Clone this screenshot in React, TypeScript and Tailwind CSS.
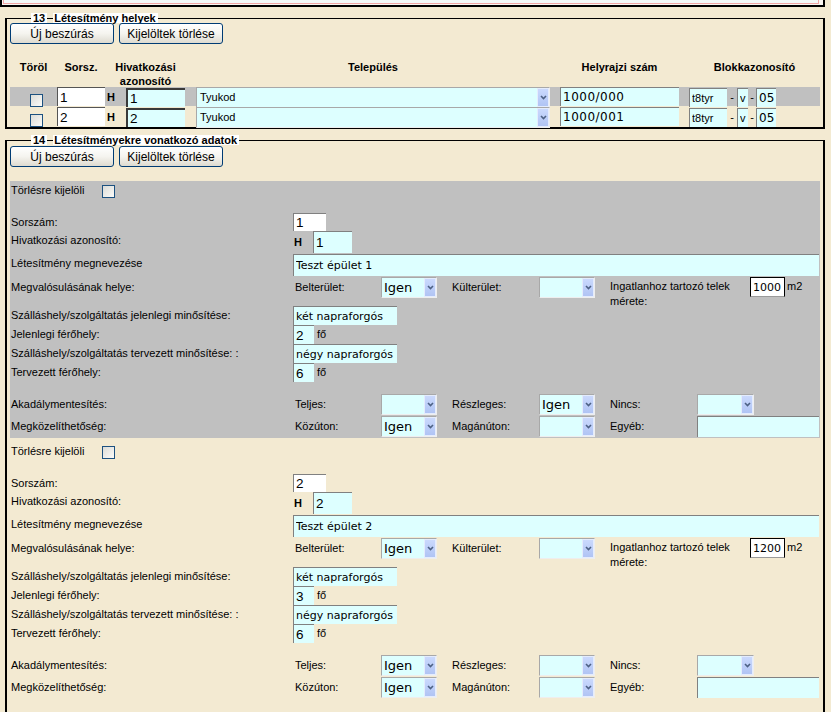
import React from "react";

// Form for sections 13 and 14: facility places and facility data.

const CYAN = "bg-[#ddffff]";
const EDGE = "border-t border-l border-t-[#808080] border-l-[#808080]";
const DIGIT = "font-['Liberation_Sans',Arial,sans-serif] text-[13.5px]";
const FIELD = "font-['DejaVu_Sans',Verdana,sans-serif] text-[11px]";

type Place = {
  no: string;
  ref: string;
  town: string;
  lot: string;
  block: [string, string, string];
};

type Facility = {
  no: string;
  ref: string;
  name: string;
  inner: string;
  outer: string;
  plot: string;
  curQual: string;
  curBeds: string;
  planQual: string;
  planBeds: string;
  full: string;
  partial: string;
  none: string;
  road: string;
  privateRoad: string;
};

const PLACES: Place[] = [
  { no: "1", ref: "1", town: "Tyukod", lot: "1000/000", block: ["t8tyr", "v", "05"] },
  { no: "2", ref: "2", town: "Tyukod", lot: "1000/001", block: ["t8tyr", "v", "05"] },
];

const FACILITIES: Facility[] = [
  {
    no: "1",
    ref: "1",
    name: "Teszt épület 1",
    inner: "Igen",
    outer: "",
    plot: "1000",
    curQual: "két napraforgós",
    curBeds: "2",
    planQual: "négy napraforgós",
    planBeds: "6",
    full: "",
    partial: "Igen",
    none: "",
    road: "Igen",
    privateRoad: "",
  },
  {
    no: "2",
    ref: "2",
    name: "Teszt épület 2",
    inner: "Igen",
    outer: "",
    plot: "1200",
    curQual: "két napraforgós",
    curBeds: "3",
    planQual: "négy napraforgós",
    planBeds: "6",
    full: "Igen",
    partial: "",
    none: "",
    road: "Igen",
    privateRoad: "",
  },
];

function Checkbox() {
  return (
    <span className="block h-[13px] w-[13px] border border-[#1c5180] bg-linear-to-br from-[#dcdcd7] to-[#fbfbf9]" />
  );
}

function XpButton({ children }: { children: React.ReactNode }) {
  return (
    <button className="h-[21px] w-[104px] rounded-[3px] border border-[#003c74] bg-linear-to-b from-white via-[#f5f4ef] to-[#dedbd0] text-[12px] leading-none text-black">
      {children}
    </button>
  );
}

function TextBox({ value, className }: { value: string; className: string }) {
  return (
    <input
      readOnly
      value={value}
      className={`shrink-0 pl-[2px] text-black outline-none ${className}`}
    />
  );
}

function Select({
  w,
  value,
  text = "pl-[2px] font-['DejaVu_Sans',Verdana,sans-serif] text-[13px]",
}: {
  w: string;
  value: string;
  text?: string;
}) {
  return (
    <div
      className={`flex h-[21px] shrink-0 border border-t-[#a8a8a8] border-l-[#a8a8a8] border-r-[#eeeeee] border-b-[#eeeeee] ${CYAN} ${w}`}
    >
      <span className={`flex flex-1 items-center overflow-hidden whitespace-nowrap ${text}`}>
        {value}
      </span>
      <span className="flex w-[12px] items-center justify-center border border-[#e4ecfd] bg-linear-to-b from-[#cad9fd] to-[#b0c4f4]">
        <svg width="7" height="5" viewBox="0 0 7 5">
          <path d="M1 1l2.5 2.5L6 1" stroke="#4d6185" strokeWidth="1.6" fill="none" />
        </svg>
      </span>
    </div>
  );
}

function Legend({ num, title }: { num: string; title: string }) {
  return (
    <div className="flex h-[10px] font-bold leading-[10px]">
      <div className="mt-[5px] w-[26px] border-t border-l-2 border-black" />
      <span className="bg-white px-[2px]">{num}</span>
      <div className="mt-[5px] w-[6px] border-t border-black" />
      <span className="bg-white pr-[2px] pl-[1px]">{title}</span>
      <div className="mt-[5px] flex-1 border-t border-r-2 border-black" />
    </div>
  );
}

function PlaceRow({ p, shaded }: { p: Place; shaded: boolean }) {
  return (
    <div
      className={`grid h-[19px] grid-cols-[47px_48px_81px_374px_119px_10px_131px] ${
        shaded ? "bg-[#c0c0c0]" : "mt-[1px]"
      }`}
    >
      <div className="flex items-end pb-[1px] pl-[20px]">
        <Checkbox />
      </div>
      <TextBox value={p.no} className={`h-[19px] w-[48px] bg-white border-t border-l border-[#555555] ${DIGIT}`} />
      <div className="flex items-center">
        <span className="w-[21px] pl-[2px] font-bold">H</span>
        <TextBox value={p.ref} className={`h-[19px] w-[59px] border-t-2 border-l-2 border-[#3a3a3a] ${CYAN} ${DIGIT}`} />
      </div>
      <div className="flex pl-[10px]">
        <Select
          w="h-[19px] w-[354px]"
          value={p.town}
          text="pl-[3px] text-[11px]"
        />
      </div>
      <TextBox
        value={p.lot}
        className={`h-[19px] w-[119px] ${CYAN} ${EDGE} font-['DejaVu_Sans',Verdana,sans-serif] text-[12px] tracking-[0.5px]`}
      />
      <div />
      <div className="flex items-center">
        <TextBox value={p.block[0]} className={`h-[19px] w-[38px] ${CYAN} ${EDGE} text-[11px]`} />
        <span className="w-[10px] text-center">-</span>
        <TextBox value={p.block[1]} className={`h-[19px] w-[11px] ${CYAN} ${EDGE} text-[11px]`} />
        <span className="w-[8px] text-center">-</span>
        <TextBox
          value={p.block[2]}
          className={`h-[19px] w-[20px] ${CYAN} ${EDGE} font-['DejaVu_Sans',Verdana,sans-serif] text-[12px]`}
        />
      </div>
    </div>
  );
}

function Row({
  label,
  h,
  lift = false,
  children,
}: {
  label: string;
  h: string;
  lift?: boolean;
  children: React.ReactNode;
}) {
  return (
    <div className={`flex items-center ${h}`}>
      <div className={`w-[283px] shrink-0 pl-[1px] ${lift ? "pb-[4px]" : ""}`}>{label}</div>
      <div className="flex h-full items-center">{children}</div>
    </div>
  );
}

function FacilityBlock({ f, shaded }: { f: Facility; shaded: boolean }) {
  return (
    <div className={shaded ? "flex flex-col bg-[#c0c0c0]" : "flex flex-col pt-[4px]"}>
      <div className="flex h-[22px] items-start pl-[1px]">
        <span className="mt-[3px] w-[91px]">Törlésre kijelöli</span>
        <span className="mt-[4px]">
          <Checkbox />
        </span>
      </div>
      <div className="h-[10px]" />
      <Row label="Sorszám:" h="h-[18px]">
        <TextBox value={f.no} className={`h-[18px] w-[33px] bg-white ${EDGE} ${DIGIT}`} />
      </Row>
      <Row label="Hivatkozási azonosító:" h="h-[22px]" lift>
        <span className="w-[20px] pl-[1px] font-bold">H</span>
        <TextBox value={f.ref} className={`h-[22px] w-[39px] ${CYAN} ${EDGE} ${DIGIT}`} />
      </Row>
      <Row label="Létesítmény megnevezése" h="mt-[1px] h-[22px]" lift>
        <TextBox value={f.name} className={`h-[22px] w-[526px] ${CYAN} ${EDGE} ${FIELD}`} />
      </Row>

      <div className="mt-[1px] flex h-[29px] items-start">
        <div className="mt-[4px] w-[283px] shrink-0 pl-[1px]">Megvalósulásának helye:</div>
        <span className="mt-[4px] w-[88px] shrink-0 pl-[2px]">Belterület:</span>
        <Select w="w-[56px]" value={f.inner} />
        <span className="mt-[4px] w-[102px] shrink-0 pl-[15px]">Külterület:</span>
        <Select w="w-[56px]" value={f.outer} />
        <span className="mt-[2px] w-[155px] shrink-0 pl-[15px] leading-[15px]">
          Ingatlanhoz tartozó telek mérete:
        </span>
        <TextBox
          value={f.plot}
          className={`h-[20px] w-[35px] border border-black border-b-[#9a9a9a] bg-white font-['DejaVu_Sans',Verdana,sans-serif] text-[11px]`}
        />
        <span className="mt-[3px] pl-[2px]">m2</span>
      </div>

      <Row label="Szálláshely/szolgáltatás jelenlegi minősítése:" h="h-[19px]">
        <TextBox value={f.curQual} className={`h-[19px] w-[104px] ${CYAN} ${EDGE} ${FIELD}`} />
      </Row>
      <Row label="Jelenlegi férőhely:" h="h-[19px]">
        <TextBox value={f.curBeds} className={`h-[19px] w-[21px] ${CYAN} ${EDGE} ${DIGIT}`} />
        <span className="pl-[3px]">fő</span>
      </Row>
      <Row label="Szálláshely/szolgáltatás tervezett minősítése: :" h="h-[19px]">
        <TextBox value={f.planQual} className={`h-[19px] w-[104px] ${CYAN} ${EDGE} ${FIELD}`} />
      </Row>
      <Row label="Tervezett férőhely:" h="h-[19px]">
        <TextBox value={f.planBeds} className={`h-[19px] w-[21px] ${CYAN} ${EDGE} ${DIGIT}`} />
        <span className="pl-[3px]">fő</span>
      </Row>

      <div className="h-[12px]" />

      <div className="flex h-[22px] items-start">
        <div className="mt-[4px] w-[283px] shrink-0 pl-[1px]">Akadálymentesítés:</div>
        <span className="mt-[4px] w-[88px] shrink-0 pl-[2px]">Teljes:</span>
        <Select w="w-[56px]" value={f.full} />
        <span className="mt-[4px] w-[102px] shrink-0 pl-[15px]">Részleges:</span>
        <Select w="w-[56px]" value={f.partial} />
        <span className="mt-[4px] w-[102px] shrink-0 pl-[15px]">Nincs:</span>
        <Select w="w-[57px]" value={f.none} />
      </div>
      <div className="flex h-[22px] items-start">
        <div className="mt-[4px] w-[283px] shrink-0 pl-[1px]">Megközelíthetőség:</div>
        <span className="mt-[4px] w-[88px] shrink-0 pl-[2px]">Közúton:</span>
        <Select w="w-[56px]" value={f.road} />
        <span className="mt-[4px] w-[102px] shrink-0 pl-[15px]">Magánúton:</span>
        <Select w="w-[56px]" value={f.privateRoad} />
        <span className="mt-[4px] w-[102px] shrink-0 pl-[15px]">Egyéb:</span>
        <TextBox value="" className={`h-[21px] w-[122px] ${CYAN} ${EDGE}`} />
      </div>
    </div>
  );
}

export default function App() {
  return (
    <div className="h-[712px] w-[831px] overflow-hidden bg-[#f3ead2] font-['Liberation_Sans',Arial,sans-serif] text-[11px] leading-[13px] text-black">
      {/* tail of the previous panel */}
      <div className="h-[7px] w-[825px] border-x-2 border-b-2 border-black bg-[#faf6f2]">
        <div className="mr-[4px] ml-[1px] h-[4px] border-x border-b border-[#f0a6a6] bg-[#f4f9f9]" />
      </div>

      {/* 13 */}
      <div className="mt-[6px] ml-[5px] w-[820px]">
        <Legend num="13" title="Létesítmény helyek" />
        <div className="border-x-2 border-b-2 border-black px-[3px] pb-[1px]">
          <div className="flex gap-[5px]">
            <XpButton>Új beszúrás</XpButton>
            <XpButton>Kijelöltek törlése</XpButton>
          </div>
          <div className="mt-[16px] grid h-[27px] grid-cols-[47px_48px_81px_374px_119px_10px_131px] text-center font-bold leading-[14px]">
            <span>Töröl</span>
            <span>Sorsz.</span>
            <span>
              Hivatkozási
              <br />
              azonosító
            </span>
            <span>Település</span>
            <span>Helyrajzi szám</span>
            <span />
            <span>Blokkazonosító</span>
          </div>
          {PLACES.map((p, i) => (
            <PlaceRow key={p.no} p={p} shaded={i === 0} />
          ))}
        </div>
      </div>

      {/* 14 */}
      <div className="mt-[6px] ml-[5px] w-[820px]">
        <Legend num="14" title="Létesítményekre vonatkozó adatok" />
        <div className="border-x-2 border-b-2 border-black px-[3px] pt-[1px] pb-[20px]">
          <div className="flex gap-[5px]">
            <XpButton>Új beszúrás</XpButton>
            <XpButton>Kijelöltek törlése</XpButton>
          </div>
          <div className="mt-[14px] flex flex-col">
            {FACILITIES.map((f, i) => (
              <FacilityBlock key={f.no} f={f} shaded={i === 0} />
            ))}
          </div>
        </div>
      </div>
    </div>
  );
}
